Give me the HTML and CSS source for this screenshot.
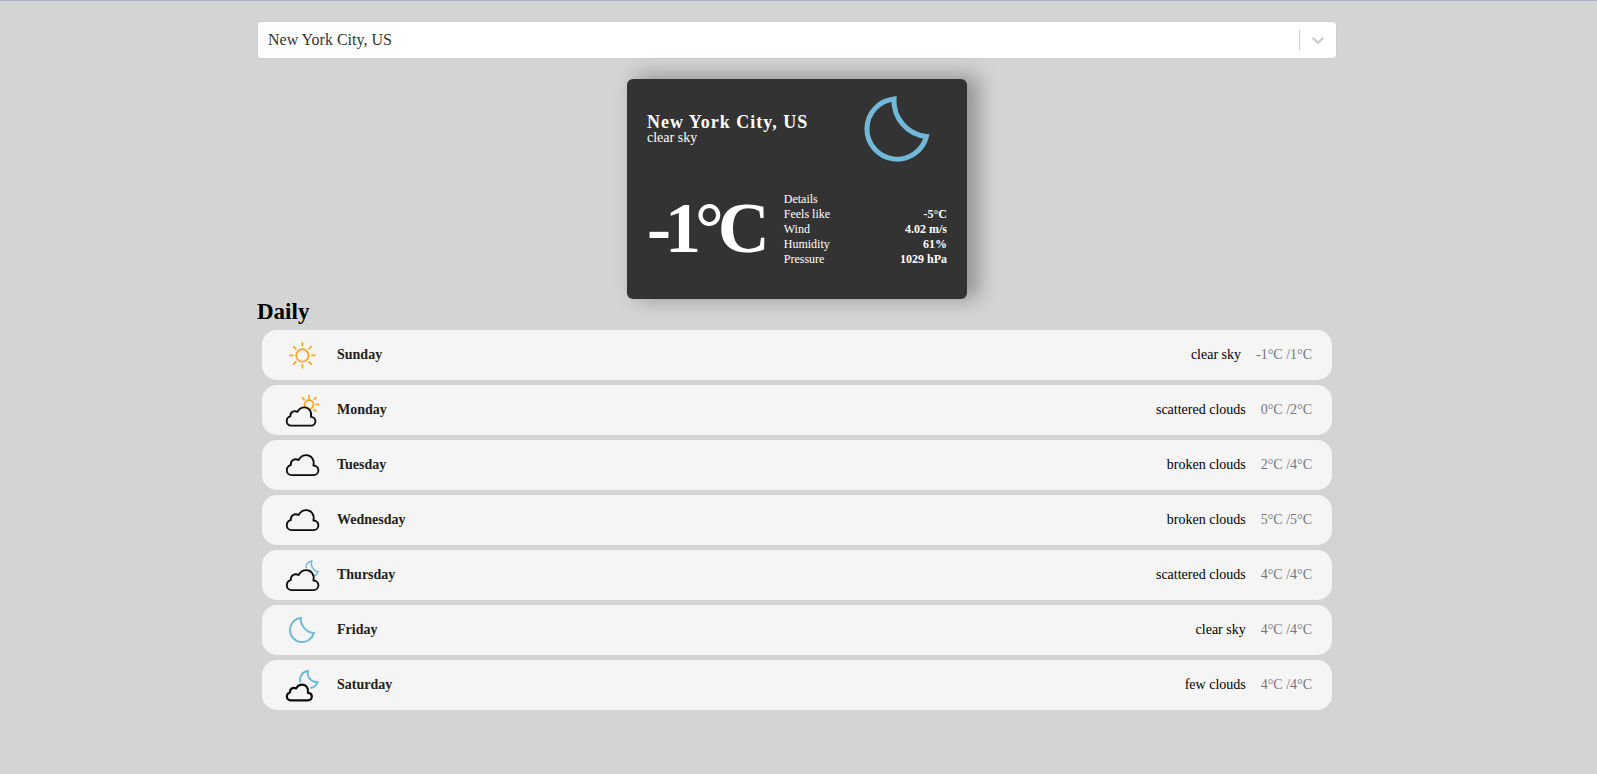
FILE: index.html
```
<!DOCTYPE html>
<html lang="en">
<head>
<meta charset="utf-8">
<title>Weather</title>
<link rel="stylesheet" href="styles.css">
</head>
<body>
<svg class="defs" width="0" height="0">
  <symbol id="cloud" viewBox="0 0 100 100" overflow="visible">
    <path vector-effect="non-scaling-stroke" d="M24.500 75.200C17 75.200 12 69.800 12 63C12 57 16 51.800 22 50.200C21 38.500 31.500 32.500 41.500 37.500C46 29.500 54 25.400 61 25.400C72 25.400 82 36 78.500 51.200C85.500 51.600 91 56.500 91 63.200C91 70 86 75.200 79 75.200Z"/>
  </symbol>
  <symbol id="moon" viewBox="0 0 100 100">
    <path class="moon" d="M47 19.900A30.200 30.200 0 1 0 79.400 57.500A36 36 0 0 1 47 19.900Z"/>
  </symbol>
</svg>
<main class="container">
  <div class="select">
    <span class="select-value">New York City, US</span>
    <span class="select-separator"></span>
    <span class="select-arrow"><svg width="20" height="20" viewBox="0 0 20 20"><path d="M4.516 7.548c0.436-0.446 1.043-0.481 1.576 0l3.908 3.747 3.908-3.747c0.533-0.481 1.141-0.446 1.574 0 0.436 0.445 0.408 1.197 0 1.615-0.406 0.418-4.695 4.502-4.695 4.502-0.217 0.223-0.502 0.335-0.787 0.335s-0.570-0.112-0.789-0.335c0 0-4.287-4.084-4.695-4.502s-0.436-1.170 0-1.615z"/></svg></span>
  </div>

  <section class="weather">
    <div class="top">
      <div>
        <p class="city">New York City, US</p>
        <p class="weather-description">clear sky</p>
      </div>
      <svg class="weather-icon" viewBox="0 0 100 100"><use href="#moon"/></svg>
    </div>
    <div class="bottom">
      <p class="temperature">-1°C</p>
      <div class="details">
        <div class="parameter-row"><span class="parameter-label">Details</span></div>
        <div class="parameter-row"><span class="parameter-label">Feels like</span><span class="parameter-value">-5°C</span></div>
        <div class="parameter-row"><span class="parameter-label">Wind</span><span class="parameter-value">4.02 m/s</span></div>
        <div class="parameter-row"><span class="parameter-label">Humidity</span><span class="parameter-value">61%</span></div>
        <div class="parameter-row"><span class="parameter-label">Pressure</span><span class="parameter-value">1029 hPa</span></div>
      </div>
    </div>
  </section>

  <h2 class="title">Daily</h2>
  <div class="daily-list">
    <div class="daily-item">
      <svg class="icon-small" viewBox="0 0 100 100"><g class="sun"><circle cx="51" cy="51" r="15.500"/><path d="M51 20v7M51 75v7M20 51h7M75 51h7M29 29l5.500 5.500M67.500 67.500l5.500 5.500M29 73l5.500-5.500M67.500 34.500l5.500-5.500"/></g></svg>
      <span class="day">Sunday</span><span class="description">clear sky</span><span class="min-max">-1°C /1°C</span>
    </div>
    <div class="daily-item">
      <svg class="icon-small" viewBox="0 0 100 100"><g class="sun"><circle cx="67.500" cy="36" r="11"/><path d="M67.500 14v6M85 36h6M51 19.500l4 4M85 19l-4 4M80.500 49l4 4"/></g><g class="cloud" transform="translate(.8 20.500) scale(.91)"><use href="#cloud" width="100" height="100"/></g></svg>
      <span class="day">Monday</span><span class="description">scattered clouds</span><span class="min-max">0°C /2°C</span>
    </div>
    <div class="daily-item">
      <svg class="icon-small" viewBox="0 0 100 100"><g class="cloud"><use href="#cloud" width="100" height="100"/></g></svg>
      <span class="day">Tuesday</span><span class="description">broken clouds</span><span class="min-max">2°C /4°C</span>
    </div>
    <div class="daily-item">
      <svg class="icon-small" viewBox="0 0 100 100"><g class="cloud"><use href="#cloud" width="100" height="100"/></g></svg>
      <span class="day">Wednesday</span><span class="description">broken clouds</span><span class="min-max">5°C /5°C</span>
    </div>
    <div class="daily-item">
      <svg class="icon-small" viewBox="0 0 100 100"><path class="moon thin" d="M60 33C59.500 24 65 16.500 74 15C71 28 78 39 90 42C88.500 47 86 51 80.500 53"/><g class="cloud" transform="translate(0 12.500)"><use href="#cloud" width="100" height="100"/></g></svg>
      <span class="day">Thursday</span><span class="description">scattered clouds</span><span class="min-max">4°C /4°C</span>
    </div>
    <div class="daily-item">
      <svg class="icon-small" viewBox="0 0 100 100"><use href="#moon"/></svg>
      <span class="day">Friday</span><span class="description">clear sky</span><span class="min-max">4°C /4°C</span>
    </div>
    <div class="daily-item">
      <svg class="icon-small" viewBox="0 0 100 100"><path class="moon medium" d="M45.500 43C42.500 28 52 16 65 15C61.500 30 72 42.500 88.500 42.500C86 51 80 56.500 71 57.500"/><g class="cloud bold" transform="translate(2.600 29) scale(.79)"><use href="#cloud" width="100" height="100"/></g></svg>
      <span class="day">Saturday</span><span class="description">few clouds</span><span class="min-max">4°C /4°C</span>
    </div>
  </div>
</main>
</body>
</html>
```
FILE: styles.css
```
* {
  box-sizing: border-box;
}

body {
  margin: 0;
  padding-right: 3px;
  min-height: 100vh;
  border-top: 1px solid #a7b0c9;
  background: #d4d4d4;
  font-family: "Liberation Serif", "Times New Roman", serif;
}

p {
  margin: 0;
}

.defs {
  position: absolute;
}

.container {
  width: 1080px;
  margin: 0 auto;
  padding-top: 20px;
}

.select {
  display: flex;
  align-items: center;
  height: 38px;
  border: 1px solid #ccc;
  border-radius: 4px;
  background: #fff;
  color: #333;
  font-size: 16px;
}

.select-value {
  flex: 1;
  padding-left: 10px;
}

.select-separator {
  width: 1px;
  height: 20px;
  background: #ccc;
}

.select-arrow {
  display: flex;
  padding: 8px;
  fill: #ccc;
}

.weather {
  width: 340px;
  height: 220px;
  margin: 20px auto 0;
  padding: 0 20px 20px;
  border-radius: 6px;
  box-shadow: 10px -2px 20px 2px rgb(0 0 0 / 30%);
  background: #333;
  color: #fff;
}

.top,
.bottom {
  display: flex;
  justify-content: space-between;
  align-items: center;
}

.city {
  font-size: 18px;
  font-weight: 600;
  line-height: 1;
  letter-spacing: 1px;
}

.weather-description {
  font-size: 14px;
  line-height: 1;
}

.weather-icon {
  width: 100px;
  height: 100px;
}

.temperature {
  margin: 9px 0 11px;
  font-size: 72px;
  font-weight: 600;
  letter-spacing: -6px;
  line-height: 80px;
  white-space: nowrap;
}

.details {
  width: 100%;
  padding-left: 20px;
}

.parameter-row {
  display: flex;
  justify-content: space-between;
  height: 15px;
  font-size: 12px;
  line-height: 15px;
}

.parameter-value {
  font-weight: 600;
}

.title {
  margin: 0;
  font-size: 23px;
  font-weight: 700;
  line-height: 26px;
}

.daily-list {
  padding: 5px;
  display: grid;
  gap: 5px;
}

.daily-item {
  display: flex;
  align-items: center;
  height: 50px;
  padding: 5px 20px;
  border-radius: 15px;
  background: #f5f5f5;
  font-size: 14px;
}

.icon-small {
  width: 40px;
  height: 40px;
}

.day {
  flex: 1;
  margin-left: 15px;
  color: #212121;
  font-weight: 600;
}

.description {
  margin-right: 15px;
  color: #000;
}

.min-max {
  color: #757575;
}

.moon {
  fill: none;
  stroke: #72b9d9;
  stroke-width: 5;
}

.moon.thin {
  stroke-width: 4;
}

.moon.medium {
  stroke-width: 5;
}

.sun {
  fill: none;
  stroke: #f8a824;
  stroke-width: 4.500;
  stroke-linecap: round;
}

.cloud {
  fill: #f5f5f5;
  stroke: #0c0c0c;
  stroke-width: 1.850px;
  stroke-linejoin: round;
}

.cloud.bold {
  stroke-width: 2.200px;
}
```
